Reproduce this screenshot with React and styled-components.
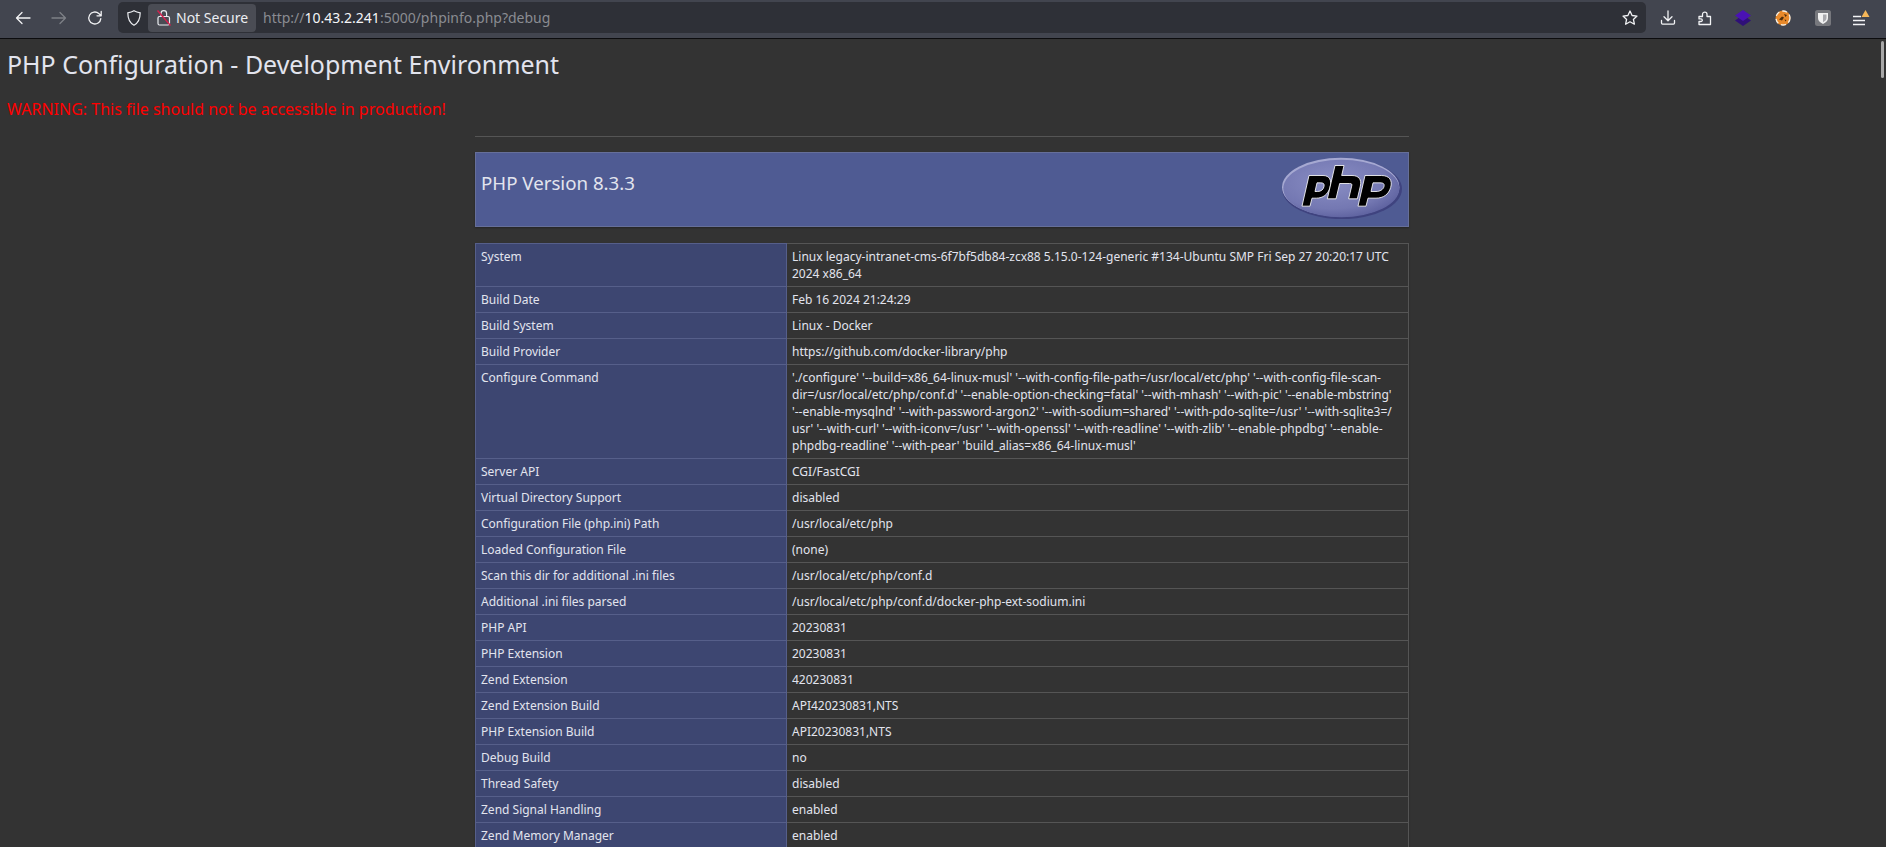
import React from "react";
import styled, { createGlobalStyle } from "styled-components";

const Global = createGlobalStyle`
  html, body { margin: 0; padding: 0; height: 100%; overflow: hidden; background: #333; }
  #root { height: 847px; overflow: hidden; }
`;
const Shell = styled.div`
  height: 847px; display: flex; flex-direction: column; background: #333;
  font-family: "Noto Sans", sans-serif; color: #e2e4ee; position: relative; overflow: hidden;
`;
const Toolbar = styled.header`
  height: 39px; box-sizing: border-box; flex: none; background: #42454f; border-bottom: 1px solid #0c0c0e;
  display: flex; align-items: center; padding: 0 0 3px 5px;
`;
const NavButton = styled.button`
  width: 36px; height: 30px; padding: 0; background: none; border: 0; flex: none;
  display: flex; align-items: center; justify-content: center;
  color: ${p => (p.$dim ? "#7d8087" : "#f2f3f5")};
`;
const UrlBar = styled.div`
  width: 1528px; height: 31px; background: #2e3037; border-radius: 5px; flex: none;
  display: flex; align-items: center; padding-left: 9px; margin-left: 5px; box-sizing: border-box;
`;
const Identity = styled.div`
  height: 28px; width: 108px; margin-left: 7px; background: #4a4c54; border-radius: 4px; flex: none;
  display: flex; align-items: center; gap: 5px; padding-left: 9px; box-sizing: border-box;
  font-size: 14px; color: #eceef2; white-space: nowrap;
`;
const Url = styled.div`
  margin-left: 7px; font-size: 14px; color: #8a8c92; white-space: nowrap; flex: 1;
  strong { font-weight: 400; color: #f4f5f7; }
`;
const Tools = styled.div`
  display: flex; align-items: center;
`;
const ToolSlot = styled.div`
  width: ${p => p.$w}px; height: 30px; flex: none;
  display: flex; align-items: center; justify-content: center; color: #f2f3f5;
`;
const Page = styled.main`
  flex: 1; overflow: hidden; padding: 0 7px; position: relative;
`;
const Title = styled.h1`
  margin: 8px 0 0; font-size: 24.95px; line-height: 34px; font-weight: 400; color: #e2e4ee;
`;
const Warning = styled.p`
  margin: 17px 0 0; font-size: 16px; line-height: 22px; color: #ff0000;
  strong { font-weight: 400; }
`;
const Center = styled.div`
  width: 934px; margin: 0 0 0 468px;
`;
const Rule = styled.hr`
  margin: 16px 0 0; height: 1px; border: 0; background: #555;
`;
const Banner = styled.div`
  margin-top: 15px; height: 75px; box-sizing: border-box; background: #4f5b93;
  border: 1px solid #666f99; box-shadow: 0 1px 2px rgba(0,0,0,.3);
  display: flex; justify-content: space-between; padding: 0 0 0 5px;
`;
const Version = styled.h2`
  margin: 17px 0 0; font-size: 18.7px; line-height: 26px; font-weight: 400; color: #e2e4ee;
`;
const Logo = styled.svg`
  width: 120px; height: 62px; margin: 4px 6px 0 0; flex: none;
`;
const Table = styled.table`
  margin-top: 16px; width: 934px; table-layout: fixed; border-collapse: collapse;
  font-size: 12px; line-height: 17px; box-shadow: 0 1px 2px rgba(0,0,0,.2);
`;
const KeyCell = styled.td`
  width: 311px; box-sizing: border-box; background: #3d4671; color: #e2e4ee;
  border: 1px solid #565f8a; padding: 4px 5px 4px 5px; vertical-align: top;
`;
const ValueCell = styled.td`
  background: #333; color: #e2e4ee; border: 1px solid #555; padding: 4px 5px; vertical-align: top;
`;
const Scrollbar = styled.div`
  position: absolute; right: 2px; top: 41px; width: 3px; height: 37px; background: #a8a8a8; border-radius: 2px;
`;

const rows = [
  ["System", ["Linux legacy-intranet-cms-6f7bf5db84-zcx88 5.15.0-124-generic #134-Ubuntu SMP Fri Sep 27 20:20:17 UTC", "2024 x86_64"]],
  ["Build Date", ["Feb 16 2024 21:24:29"]],
  ["Build System", ["Linux - Docker"]],
  ["Build Provider", ["https://github.com/docker-library/php"]],
  ["Configure Command", [
    "'./configure' '--build=x86_64-linux-musl' '--with-config-file-path=/usr/local/etc/php' '--with-config-file-scan-",
    "dir=/usr/local/etc/php/conf.d' '--enable-option-checking=fatal' '--with-mhash' '--with-pic' '--enable-mbstring'",
    "'--enable-mysqlnd' '--with-password-argon2' '--with-sodium=shared' '--with-pdo-sqlite=/usr' '--with-sqlite3=/",
    "usr' '--with-curl' '--with-iconv=/usr' '--with-openssl' '--with-readline' '--with-zlib' '--enable-phpdbg' '--enable-",
    "phpdbg-readline' '--with-pear' 'build_alias=x86_64-linux-musl'",
  ]],
  ["Server API", ["CGI/FastCGI"]],
  ["Virtual Directory Support", ["disabled"]],
  ["Configuration File (php.ini) Path", ["/usr/local/etc/php"]],
  ["Loaded Configuration File", ["(none)"]],
  ["Scan this dir for additional .ini files", ["/usr/local/etc/php/conf.d"]],
  ["Additional .ini files parsed", ["/usr/local/etc/php/conf.d/docker-php-ext-sodium.ini"]],
  ["PHP API", ["20230831"]],
  ["PHP Extension", ["20230831"]],
  ["Zend Extension", ["420230831"]],
  ["Zend Extension Build", ["API420230831,NTS"]],
  ["PHP Extension Build", ["API20230831,NTS"]],
  ["Debug Build", ["no"]],
  ["Thread Safety", ["disabled"]],
  ["Zend Signal Handling", ["enabled"]],
  ["Zend Memory Manager", ["enabled"]],
];

const Stroke = ({ children, size = 16 }) => (
  <svg width={size} height={size} viewBox="0 0 16 16" fill="none" stroke="currentColor" strokeWidth="1.3" strokeLinecap="round" strokeLinejoin="round">{children}</svg>
);

export default function App() {
  return (
    <Shell>
      <Global />
      <Toolbar>
        <NavButton aria-label="Back"><Stroke><path d="M15 8H1.500M7 2.500 1.500 8 7 13.500" /></Stroke></NavButton>
        <NavButton $dim aria-label="Forward"><Stroke><path d="M1 8h13.500M9 2.500 14.500 8 9 13.500" /></Stroke></NavButton>
        <NavButton aria-label="Reload"><Stroke><path d="M13.800 8.600A6 6 0 1 1 11.800 3.500L14 5.600M14.200 1.500v4.300H10" /></Stroke></NavButton>
        <UrlBar>
          <svg width="14" height="16" viewBox="0 0 14 16" fill="none" stroke="#eceef2" strokeWidth="1.200" style={{ flex: "none" }}><path d="M7 .8c2 1.200 3.800 1.700 6.200 2 0 5.200-1 9.800-6.200 12.400C1.800 12.600.8 8 .8 2.800 3.200 2.500 5 2 7 .8Z" /></svg>
          <Identity>
            <svg width="14" height="17" viewBox="0 0 14 17" fill="none" style={{ flex: "none" }}>
              <rect x="1" y="7.500" width="11.500" height="8.500" rx="1.500" stroke="#eceef2" strokeWidth="1.200" />
              <path d="M4 7.500V4.500a2.800 2.800 0 0 1 5.600 0v3" stroke="#eceef2" strokeWidth="1.200" />
              <path d="M.5 1.500 13.500 16.500" stroke="#d6204e" strokeWidth="1.400" />
            </svg>
            <span>Not Secure</span>
          </Identity>
          <Url>http://<strong>10.43.2.241</strong>:5000/phpinfo.php?debug</Url>
          <ToolSlot $w={32}><Stroke><path d="M8 1l2.100 4.500 4.900.6-3.600 3.300 1 4.800L8 11.800l-4.400 2.400 1-4.800L1 6.100l4.900-.6z" /></Stroke></ToolSlot>
        </UrlBar>
        <Tools>
          <ToolSlot $w={44}><Stroke><path d="M8 1v9.500M4 6.800l4 3.900 4-3.900M1.500 10.500v2.600a1 1 0 0 0 1 1h11a1 1 0 0 0 1-1v-2.600" /></Stroke></ToolSlot>
          <ToolSlot $w={30}><Stroke><path d="M2 6.500h3.500V4.200C5.500 1.500 10 1.500 10 4.200v2.300h3.500v8H2V11.500h2a1.300 1.300 0 0 0 0-2.600H2z" /></Stroke></ToolSlot>
          <ToolSlot $w={46}>
            <svg width="16" height="16" viewBox="0 0 16 16"><path d="M8 5 16 10.500 8 16 0 10.500z" fill="#2f1078" /><path d="M8 0l8 5.500L8 11 0 5.500z" fill="#4a12b4" /></svg>
          </ToolSlot>
          <ToolSlot $w={34}>
            <svg width="16" height="16" viewBox="0 0 16 16">
              <circle cx="8" cy="8" r="7.500" fill="#e8892a" />
              <circle cx="8" cy="8" r="7" fill="none" stroke="#f4f1ea" strokeWidth="1.300" strokeDasharray="5 3" />
              <path d="M4 9.500l3-3 2 1-2 3zM9 4l3 1-1.500 2zM9.500 9.500l2 .5-1 1.500z" fill="#4f2e0c" />
            </svg>
          </ToolSlot>
          <ToolSlot $w={46}>
            <svg width="16" height="16" viewBox="0 0 16 16"><rect width="16" height="16" rx="2.500" fill="#77787d" /><path d="M3 3h10v5c0 3-2 4.500-5 6-3-1.500-5-3-5-6z" fill="#f1f1f1" /><path d="M8 4.500h3.500V8c0 2-1.500 3-3.500 4.300z" fill="#a9a9ad" /></svg>
          </ToolSlot>
          <ToolSlot $w={30}>
            <svg width="18" height="18" viewBox="0 0 18 18" fill="none"><path d="M1 7.500h8M1 11.500h12M1 15.500h12" stroke="#f2f3f5" strokeWidth="1.300" /><path d="M13.500 1 17.500 8H9.500z" fill="#f5b759" /></svg>
          </ToolSlot>
        </Tools>
      </Toolbar>
      <Page>
        <Title>PHP Configuration - Development Environment</Title>
        <Warning><strong>WARNING:</strong> This file should not be accessible in production!</Warning>
        <Center>
          <Rule />
          <Banner>
            <Version>PHP Version 8.3.3</Version>
            <Logo viewBox="22 25 360 185">
              <defs>
                <radialGradient id="ov" cx=".42" cy=".38" r=".68"><stop offset="0" stopColor="#8a8ec4" /><stop offset=".7" stopColor="#7478b2" /><stop offset="1" stopColor="#5a5e9c" /></radialGradient>
              </defs>
              <ellipse cx="202" cy="120" rx="180" ry="91" fill="#3f437f" />
              <ellipse cx="198" cy="115" rx="176" ry="88" fill="#a6a9d2" />
              <ellipse cx="200" cy="119" rx="174" ry="86" fill="url(#ov)" />
              <g fill="#000" stroke="#fff" strokeWidth="2.500" strokeLinejoin="round" fillRule="evenodd">
                <path d="M82 172 103 80H145C165 80 172 95 166 116 160 137 145 148 125 148H112L106 172ZM127 102 121 128H128C140 128 146 122 148 113 150 105 146 102 138 102Z" />
                <path d="M181 50H208L201 80H232C252 80 262 92 257 112L248 150H222L231 112C233 106 231 104 225 104H195L184 150H158Z" />
                <path d="M250 172 271 80H320C345 80 354 95 348 116 342 137 326 148 304 148H280L274 172ZM295 102 289 128H304C316 128 326 122 328 113 330 105 326 102 316 102Z" />
              </g>
            </Logo>
          </Banner>
          <Table>
            <tbody>
              {rows.map(([k, lines]) => (
                <tr key={k}>
                  <KeyCell>{k}</KeyCell>
                  <ValueCell>{lines.map((l, i) => <React.Fragment key={i}>{i > 0 && <br />}{l}</React.Fragment>)}</ValueCell>
                </tr>
              ))}
            </tbody>
          </Table>
        </Center>
      </Page>
      <Scrollbar />
    </Shell>
  );
}
